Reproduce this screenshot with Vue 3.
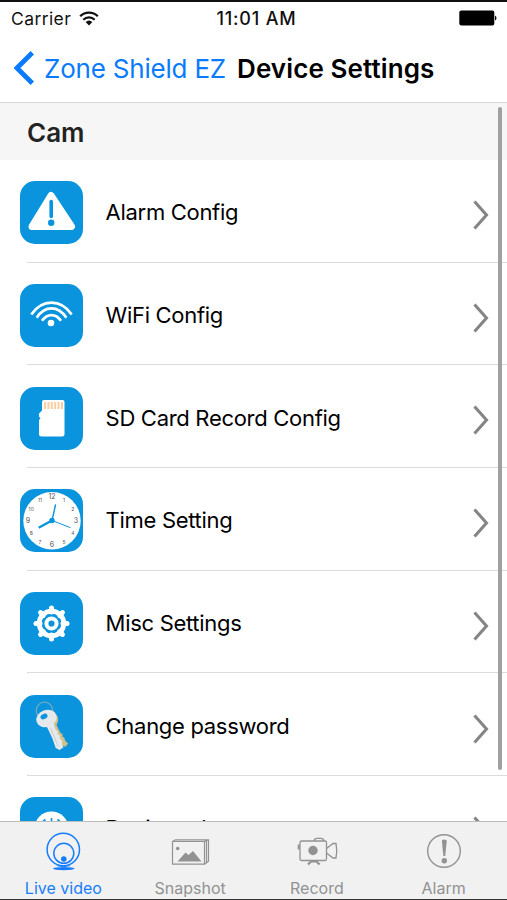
<template>
  <div class="screen">
    <header class="status-bar">
      <div class="carrier">
        <span>Carrier</span>
        <svg class="signal" viewBox="0 0 20 15">
          <path d="M1.2 5.2a12.6 12.6 0 0 1 17.6 0" fill="none" stroke="#111" stroke-width="2.3" />
          <path d="M4.3 8.7a8.2 8.2 0 0 1 11.4 0" fill="none" stroke="#111" stroke-width="2.2" />
          <path d="M6.6 11a5 5 0 0 1 6.8 0L10 14.5z" fill="#111" />
        </svg>
      </div>
      <span class="clock">11:01 AM</span>
      <svg class="battery" viewBox="0 0 39 16">
        <rect x="0.3" y="0.4" width="35" height="15" rx="2" fill="#000" />
        <path d="M36 5.4q3 2.6 0 5.2z" fill="#000" />
      </svg>
    </header>

    <nav class="nav-bar">
      <svg class="back-arrow" viewBox="0 0 20 34">
        <path d="M18.3 1.8 3 17l15.3 15.2" fill="none" stroke="#0a7aff" stroke-width="4.8" />
      </svg>
      <span class="back-label">Zone Shield EZ</span>
      <h1 class="title">Device Settings</h1>
    </nav>

    <main class="content">
      <h2 class="section-title">Cam</h2>
      <ul class="list">
        <li v-for="item in items" :key="item.icon" class="row">
          <svg class="row-icon" viewBox="0 0 63 63">
            <rect width="63" height="63" rx="15" fill="#0994dd" />
            <g v-if="item.icon === 'alarm'">
              <path d="M31 14.5 51.5 45.5H12z" fill="#fff" stroke="#fff" stroke-width="7" stroke-linejoin="round" />
              <path d="M31.2 20.5v15" stroke="#0994dd" stroke-width="3.6" stroke-linecap="round" />
              <circle cx="31.2" cy="41.8" r="3.2" fill="#0994dd" />
            </g>
            <g v-else-if="item.icon === 'wifi'" fill="none" stroke="#fff" stroke-width="2.6">
              <path d="M11.3 30.5c11-15.8 29.4-15.8 40.4 0" />
              <path d="M16.7 33.7c8.2-12.4 21.4-12.4 29.6 0" />
              <path d="M22 36.8c5.3-7.6 13.7-7.6 19 0" />
              <circle cx="31" cy="39" r="3.3" fill="#fff" stroke="none" />
            </g>
            <g v-else-if="item.icon === 'sd'">
              <path
                d="M24 13h18.5q2 0 2 2v32q0 2.5-2.5 2.5H21.5q-2.5 0-2.5-2.5V33l1.5-1.5-1.5-2v-3l3-3V15q0-2 2-2z"
                fill="#fff"
              />
              <path d="M25 15v7M28.4 15v7M31.8 15v7M35.2 15v7M38.6 15v7M42 15v7" stroke="#f8cda0" stroke-width="2" />
            </g>
            <g v-else-if="item.icon === 'clock'">
              <circle cx="32" cy="31.7" r="28.7" fill="#fff" />
              <text
                v-for="n in 12"
                :key="n"
                class="numeral"
                :class="{ major: n % 3 === 0 }"
                :x="numeralX(n)"
                :y="numeralY(n)"
              >{{ n }}</text>
              <g stroke="#0994dd" stroke-linecap="round">
                <path d="M32 31.5 35.5 16" stroke-width="1.4" />
                <path d="M32 31.5 50 38.5" stroke-width="1" />
                <path d="M32 31.5 19.5 38.3" stroke-width="2.4" />
              </g>
              <circle cx="32" cy="31.5" r="2.7" fill="#0994dd" />
            </g>
            <g v-else-if="item.icon === 'gear'">
              <path
                v-for="n in 8"
                :key="n"
                d="M31.5 16v4"
                stroke="#fff"
                stroke-width="5"
                stroke-linecap="round"
                :transform="`rotate(${n * 45} 31.5 31.5)`"
              />
              <circle cx="31.5" cy="31.5" r="12.3" fill="none" stroke="#fff" stroke-width="4.8" />
              <circle cx="31.5" cy="31.5" r="5.1" fill="none" stroke="#fff" stroke-width="4" />
            </g>
            <g v-else-if="item.icon === 'keys'">
              <circle cx="24.5" cy="15.5" r="8.3" fill="none" stroke="#75a9bd" stroke-width="1.3" />
              <path
                d="M34 18c5 3 5 8 2.5 12l4 8 2 1v2.5l2 1.5.5 2.5 3 3-2.5 3.2-3-1L31 28z"
                fill="#d2c08b"
              />
              <ellipse cx="26.5" cy="23.5" rx="10.5" ry="8.5" transform="rotate(-20 26.5 23.5)" fill="#e6e9ec" />
              <path d="m26 30 7.5-2 2.3 7 2 1-.3 3 2.5 1.5-.2 3 2.4 2-.2 3 1.4 4-3.9 2.5-3.8-2-3.5-10z" fill="#e6e9ec" />
              <path d="m30.5 33 7.5 18" stroke="#c8ced2" stroke-width="1" />
              <ellipse cx="24" cy="21.5" rx="3.7" ry="2.5" transform="rotate(-25 24 21.5)" fill="#0994dd" />
            </g>
            <g v-else>
              <circle cx="31.5" cy="31.5" r="17" fill="#fff" />
              <path d="M31.5 21v11M25.5 22.5a11 11 0 1 0 12 0" fill="none" stroke="#0994dd" stroke-width="1.6" />
            </g>
          </svg>
          <div class="row-body">
            <span class="row-label">{{ item.label }}</span>
            <svg class="chevron" viewBox="0 0 16 30">
              <path d="M1.5 1.5 13.5 15 1.5 28.5" fill="none" stroke="#858585" stroke-width="3.1" />
            </svg>
          </div>
        </li>
      </ul>
      <div class="scrollbar"></div>
    </main>

    <footer class="tab-bar">
      <div v-for="tab in tabs" :key="tab.icon" class="tab" :class="{ active: tab.icon === 'live' }">
        <svg class="tab-icon" viewBox="0 0 44 40" fill="none" stroke="currentColor">
          <g v-if="tab.icon === 'live'">
            <circle cx="22.3" cy="18.5" r="16.2" stroke-width="1.5" />
            <circle cx="22.8" cy="22.3" r="10" stroke-width="1.5" />
            <circle cx="22.8" cy="28" r="2.8" fill="currentColor" stroke="none" />
            <path d="M16 34.7q6.5 1.8 13 0" stroke-width="1" />
            <ellipse cx="22.8" cy="37.6" rx="11" ry="1.6" fill="currentColor" stroke="none" />
          </g>
          <g v-else-if="tab.icon === 'snapshot'" stroke-width="1.2">
            <path d="M4.5 10.5h32v22.7h-32zM4.5 10.5l3-1.7h33v21.5l-4 2.9M36.5 10.5l4-1.7M38.5 9.8v21.8" />
            <circle cx="9.7" cy="17.5" r="1.8" fill="currentColor" stroke="none" />
            <path d="m9.5 30.5 8-9 3 2.5 4.5-4 8.5 10.5z" fill="currentColor" stroke="none" />
          </g>
          <g v-else-if="tab.icon === 'record'" stroke-width="1.3">
            <rect x="5" y="10" width="26.5" height="19.5" rx="1.5" />
            <path d="M19 10q.5-2.7 3-2.7h4q2.5 0 3 2.7" />
            <path d="M31.5 17.5 38 12.5h3q1.5 7 0 14.5h-3l-6.5-5" />
            <path d="M3.7 13.5v5" stroke-width="2" />
            <circle cx="18" cy="19.5" r="4.7" fill="currentColor" stroke="none" />
            <path d="m13 33.5 3-3h5.5l3 3" stroke-width="2.2" />
          </g>
          <g v-else>
            <circle cx="22" cy="20" r="16.3" stroke-width="1.4" />
            <path d="M19.8 9.5q2.5-2 5 0L23.2 25h-1.8z" fill="currentColor" stroke="none" />
            <circle cx="22.3" cy="29.7" r="2.7" fill="currentColor" stroke="none" />
          </g>
        </svg>
        <span class="tab-label">{{ tab.label }}</span>
      </div>
    </footer>
  </div>
</template>

<script setup>
const items = [
  { icon: 'alarm', label: 'Alarm Config' },
  { icon: 'wifi', label: 'WiFi Config' },
  { icon: 'sd', label: 'SD Card Record Config' },
  { icon: 'clock', label: 'Time Setting' },
  { icon: 'gear', label: 'Misc Settings' },
  { icon: 'keys', label: 'Change password' },
  { icon: 'reboot', label: 'Device reboot' }
]

const tabs = [
  { icon: 'live', label: 'Live video' },
  { icon: 'snapshot', label: 'Snapshot' },
  { icon: 'record', label: 'Record' },
  { icon: 'alarm', label: 'Alarm' }
]

const numeralX = (n) => 32 + 24 * Math.sin((n * Math.PI) / 6)
const numeralY = (n) => 33.8 - 24 * Math.cos((n * Math.PI) / 6)
</script>

<style>
body {
  margin: 0;
}
</style>

<style scoped>
.screen {
  display: flex;
  flex-direction: column;
  box-sizing: border-box;
  width: 507px;
  height: 900px;
  overflow: hidden;
  border-top: 2px solid #111;
  border-bottom: 1px solid #333;
  background: #fff;
  color: #111;
  font-family: Inter, "Liberation Sans", sans-serif;
}

.status-bar {
  display: grid;
  grid-template-columns: 1fr auto 1fr;
  align-items: center;
  height: 32px;
  padding: 0 9px 0 11px;
  font-size: 17.5px;
}

.carrier {
  display: flex;
  align-items: center;
  gap: 8px;
  letter-spacing: 0.4px;
}

.signal {
  width: 20px;
  height: 15px;
}

.clock {
  margin-left: 4px;
  font-weight: 500;
  font-size: 18px;
  letter-spacing: 0.8px;
}

.battery {
  width: 39px;
  height: 16px;
  justify-self: end;
}

.nav-bar {
  display: flex;
  align-items: center;
  height: 68px;
  padding-left: 14px;
  border-bottom: 1px solid #d5d5d5;
}

.back-arrow {
  width: 20px;
  height: 34px;
}

.back-label {
  margin-left: 10px;
  width: 193px;
  color: #0a7aff;
  font-size: 26px;
  letter-spacing: -0.2px;
  white-space: nowrap;
}

.title {
  margin: 0;
  color: #000;
  font-size: 26px;
  font-weight: 600;
  letter-spacing: 0.1px;
  white-space: nowrap;
}

.content {
  position: relative;
  flex: 1;
  min-height: 0;
  overflow: hidden;
}

.section-title {
  margin: 0;
  height: 57px;
  padding-left: 27px;
  background: #f6f6f6;
  color: #222;
  font-size: 26px;
  font-weight: 600;
  line-height: 59px;
}

.list {
  margin: 0;
  padding: 0;
  list-style: none;
}

.row {
  display: flex;
  align-items: center;
  height: 102.7px;
  padding-left: 20px;
}

.row-icon {
  flex: none;
  width: 63px;
  height: 63px;
  margin-top: 3px;
}

.row-body {
  display: flex;
  flex: 1;
  align-items: center;
  justify-content: space-between;
  height: 100%;
  padding: 3px 18px 0 22.6px;
  box-sizing: border-box;
}

.row:not(:last-child) {
  background: linear-gradient(#dcdcdc, #dcdcdc) 27px 100% / 100% 1px no-repeat;
}

.row-label {
  margin-top: -1.2px;
  color: #000;
  font-size: 22px;
  letter-spacing: -0.3px;
}

.chevron {
  width: 16px;
  height: 30px;
  margin-top: 4.5px;
}

.numeral {
  fill: #555;
  font-size: 5px;
  text-anchor: middle;
}

.numeral.major {
  font-size: 7px;
}

.scrollbar {
  position: absolute;
  top: 4px;
  right: 5px;
  width: 4px;
  height: 663px;
  border-radius: 2px;
  background: #a0a0a0;
}

.tab-bar {
  display: grid;
  grid-template-columns: repeat(4, 1fr);
  height: 77px;
  border-top: 1px solid #bdbdbd;
  background: #f1f1f1;
}

.tab {
  display: flex;
  flex-direction: column;
  align-items: center;
  padding-top: 9px;
  color: #929292;
}

.tab.active {
  color: #177efb;
}

.tab-icon {
  width: 44px;
  height: 40px;
}

.tab-label {
  margin-top: 6px;
  font-size: 16px;
  line-height: 22px;
}
</style>
